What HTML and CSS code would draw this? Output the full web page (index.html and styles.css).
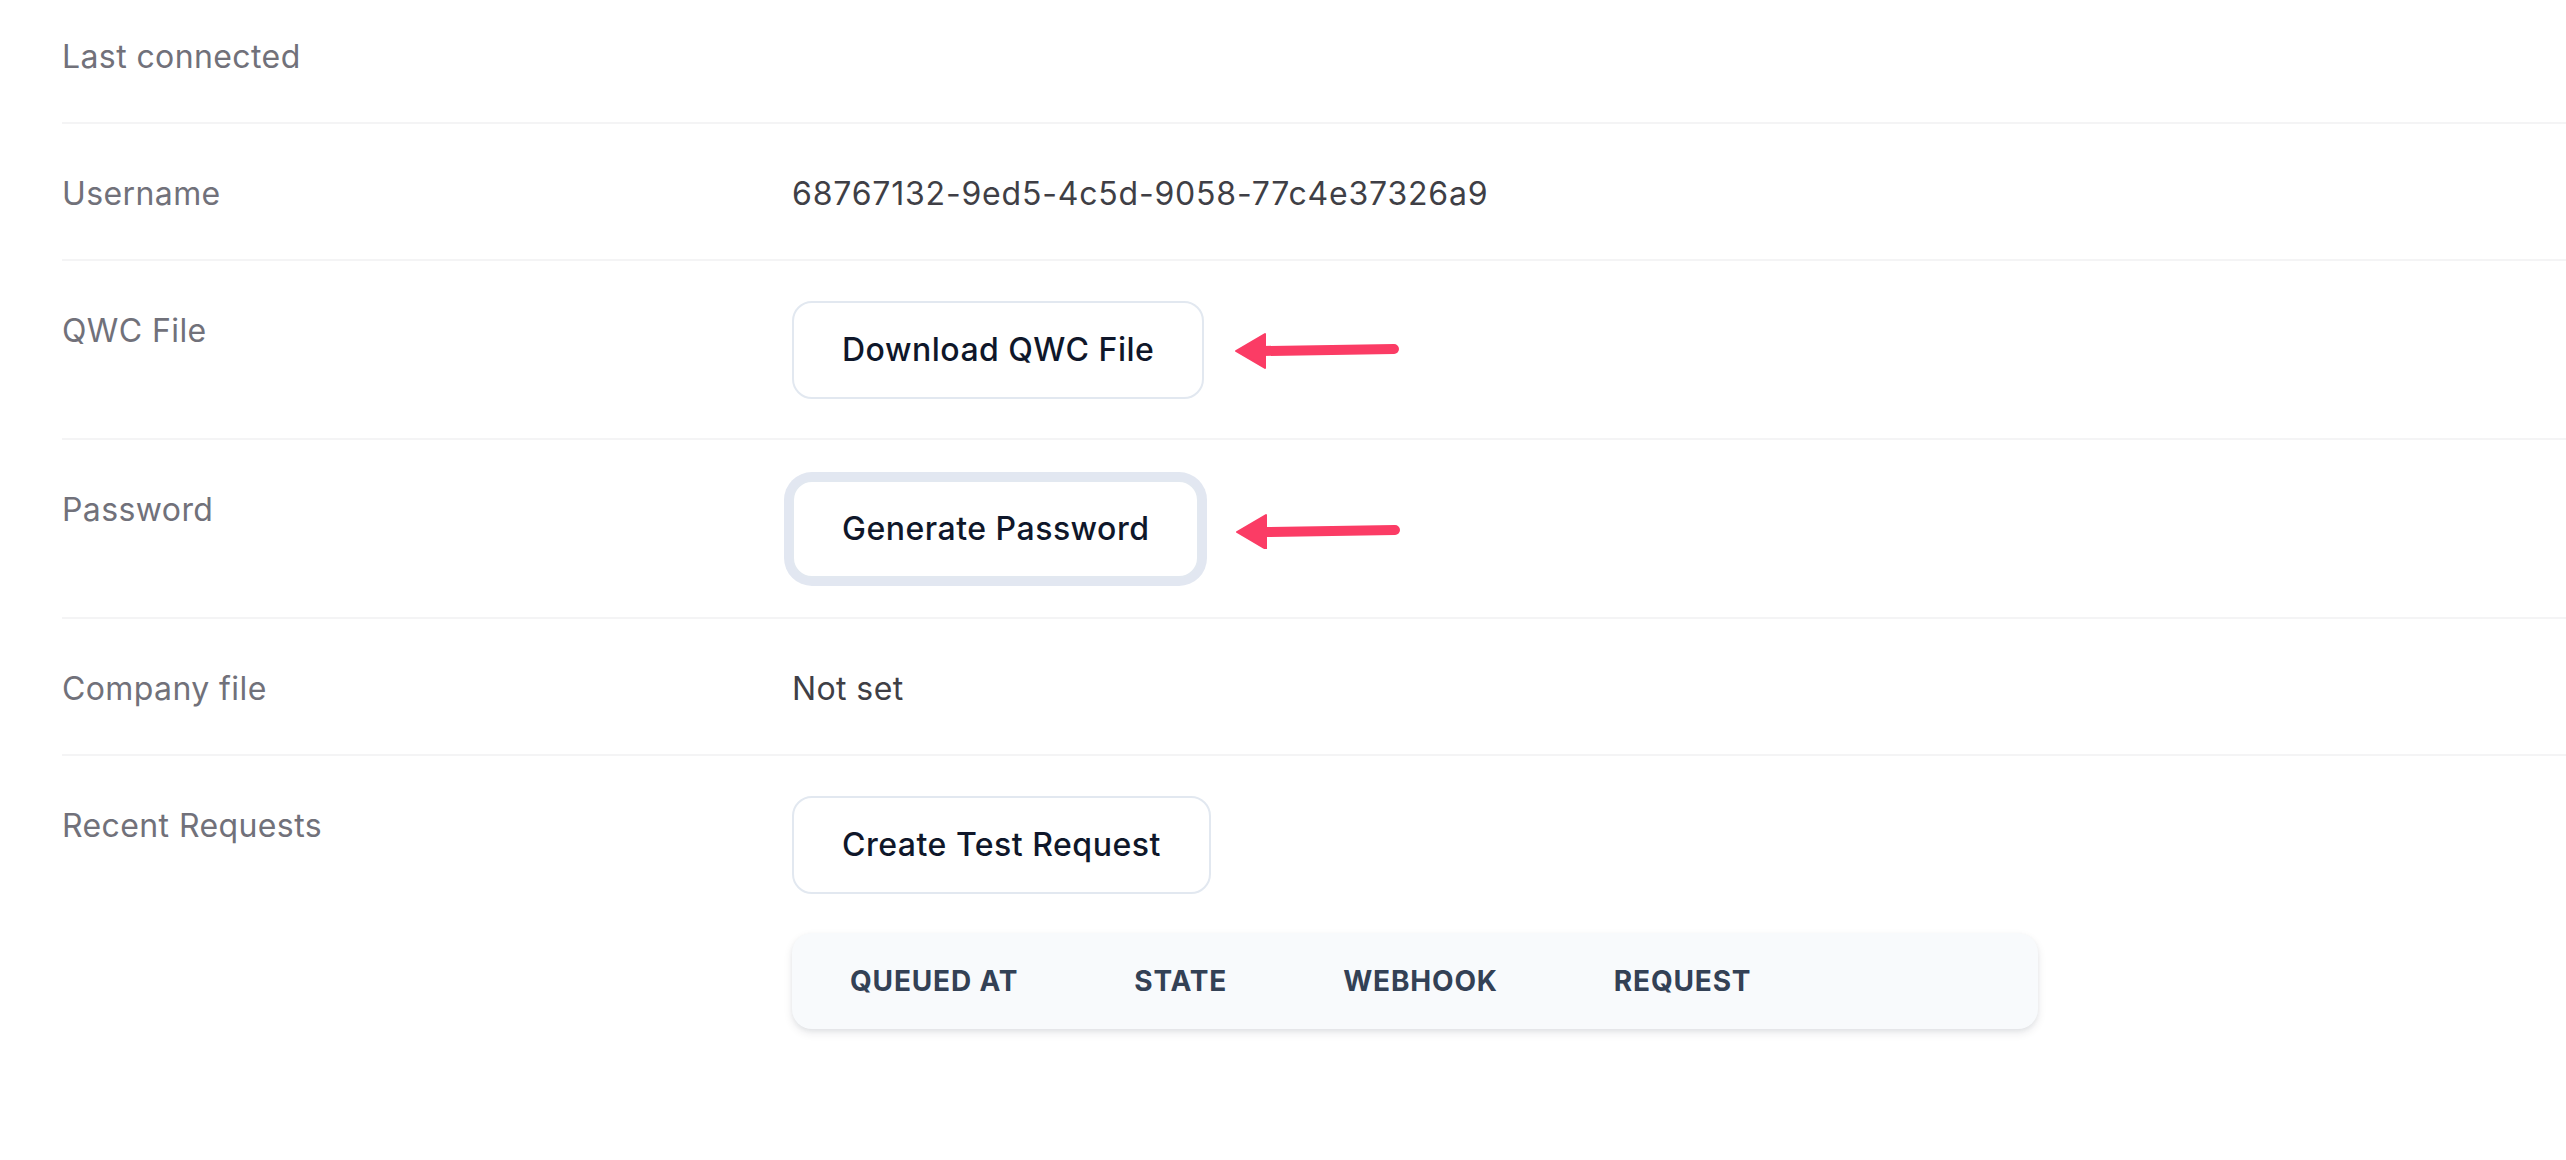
FILE: index.html
```html
<!DOCTYPE html>
<html lang="en">
<head>
<meta charset="utf-8">
<title>Connection details</title>
<link rel="stylesheet" href="styles.css">
</head>
<body>
<main class="details">
  <div class="row">
    <div class="label">Last connected</div>
    <div class="value text"></div>
  </div>
  <div class="row">
    <div class="label">Username</div>
    <div class="value text value--id">68767132-9ed5-4c5d-9058-77c4e37326a9</div>
  </div>
  <div class="row">
    <div class="label">QWC File</div>
    <div class="value action">
      <button class="btn" type="button">Download QWC File</button>
      <svg class="arrow" viewBox="0 0 166 40" width="166" height="40" aria-hidden="true">
        <path d="M30 21 L161 19" stroke="#fb3c65" stroke-width="10" stroke-linecap="round" fill="none"/>
        <path d="M3 21 L32 4 L32 38 Z" fill="#fb3c65" stroke="#fb3c65" stroke-width="2" stroke-linejoin="round"/>
      </svg>
    </div>
  </div>
  <div class="row">
    <div class="label">Password</div>
    <div class="value action">
      <button class="btn btn--focus" type="button">Generate Password</button>
      <svg class="arrow arrow--wide" viewBox="0 0 166 40" width="166" height="40" aria-hidden="true">
        <path d="M30 23 L161 21" stroke="#fb3c65" stroke-width="10" stroke-linecap="round" fill="none"/>
        <path d="M3 23 L32 6 L32 40 Z" fill="#fb3c65" stroke="#fb3c65" stroke-width="2" stroke-linejoin="round"/>
      </svg>
    </div>
  </div>
  <div class="row">
    <div class="label">Company file</div>
    <div class="value text">Not set</div>
  </div>
  <div class="row">
    <div class="label">Recent Requests</div>
    <div class="value stack">
      <button class="btn" type="button">Create Test Request</button>
      <div class="table-wrap">
        <table class="requests">
          <thead>
            <tr>
              <th>Queued at</th>
              <th>State</th>
              <th>Webhook</th>
              <th>Request</th>
              <th class="fill"></th>
            </tr>
          </thead>
        </table>
      </div>
    </div>
  </div>
</main>
</body>
</html>
```

FILE: styles.css
```css
* {
  box-sizing: border-box;
}

html, body {
  margin: 0;
  background: #ffffff;
}

body {
  font-family: Inter, "Noto Sans", "Liberation Sans", sans-serif;
  overflow: hidden;
}

.details {
  padding-left: 62px;
}

.row {
  display: grid;
  grid-template-columns: 730px 1fr;
  padding: 40px 0 39px;
  border-bottom: 2px solid #f4f4f5;
}

.row:first-child {
  padding-top: 27px;
}

.row:last-child {
  border-bottom: none;
}

.label {
  font-size: 32px;
  line-height: 53px;
  padding-top: 3px;
  min-height: 56px;
  letter-spacing: 0.4px;
  color: #71717a;
}

.value {
  font-size: 32px;
  letter-spacing: 0.4px;
  color: #3f3f46;
  min-height: 56px;
}

.text {
  line-height: 53px;
  padding-top: 3px;
}

.value--id {
  letter-spacing: 0.8px;
}

.action {
  display: flex;
  align-items: center;
}

.stack {
  display: flex;
  flex-direction: column;
  align-items: flex-start;
  gap: 39px;
}

.btn {
  font-family: inherit;
  font-size: 32px;
  font-weight: 500;
  line-height: 56px;
  letter-spacing: 0.5px;
  color: #0f172a;
  background: #ffffff;
  border: 2px solid #e2e8f0;
  border-radius: 20px;
  padding: 19px 48px;
  cursor: pointer;
}

.btn--focus {
  box-shadow: 0 0 0 8px #e2e7f1;
}

.arrow {
  display: block;
  margin-left: 29px;
  flex: none;
}

.arrow--wide {
  margin-left: 35px;
}

.table-wrap {
  width: 1246px;
  border-radius: 20px;
  overflow: hidden;
  background: #f8fafc;
  box-shadow: 0 4px 10px rgba(15, 23, 42, 0.09), 0 2px 4px rgba(15, 23, 42, 0.05);
}

.requests {
  width: 100%;
  border-collapse: collapse;
}

.requests th {
  text-align: left;
  white-space: nowrap;
  padding: 28px 58px;
  font-size: 28px;
  line-height: 40px;
  font-weight: 700;
  letter-spacing: 0.03em;
  text-transform: uppercase;
  color: #334155;
}

.requests th.fill {
  width: 100%;
  padding: 0;
}
```
